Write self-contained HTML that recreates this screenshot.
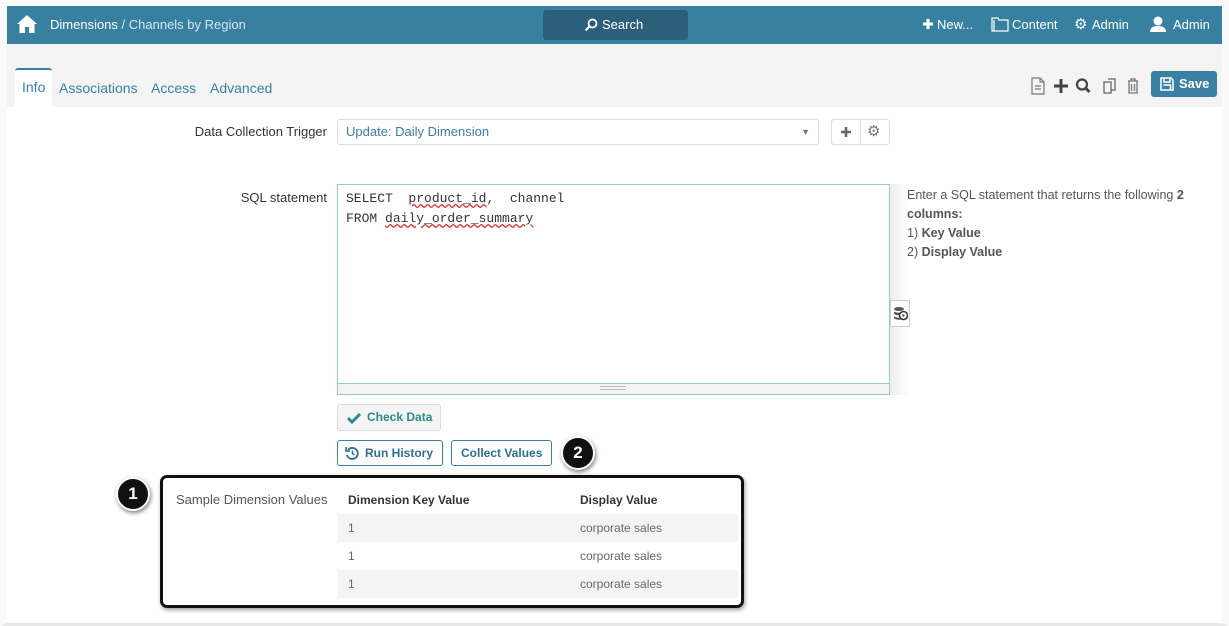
<!DOCTYPE html>
<html><head><style>
*{box-sizing:border-box;margin:0;padding:0}
body{width:1229px;height:626px;background:#fff;font-family:"Liberation Sans",sans-serif;position:relative;overflow:hidden}
.a{position:absolute}
.frame{left:0;top:0;width:1229px;height:626px;border:1px solid #d8d8d8;border-top:6px solid #fafafa;border-left:7px solid #fafafa;border-right:7px solid #fafafa;border-bottom:3px solid #e8e8e8}
.hdr{left:7px;top:6px;width:1215px;height:38px;background:#3880a0;color:#fff;font-size:13px}
.tabs{left:7px;top:44px;width:1215px;height:63px;background:#f4f4f4}
.tab{top:87px;font-size:14px;color:#3a7fa6}
.lbl{font-size:13px;color:#333;text-align:right;width:200px}
.btn{border:1px solid #3a80a5;border-radius:3px;background:#fff;color:#2f6f92;font-size:12px;font-weight:bold;height:26px;line-height:24px;padding:0 9px}
.circ{width:34px;height:34px;border-radius:50%;background:#111;border:2px solid #fff;color:#fff;font-size:17px;font-weight:bold;text-align:center;line-height:30px;box-shadow:1px 2px 4px rgba(0,0,0,.5)}
.row{left:338px;width:400px;height:28px;font-size:12px;color:#666;line-height:28px}
</style></head><body>
<div class="a frame"></div>
<div class="a hdr">
 <svg class="a" style="left:9px;top:8px" width="22" height="20" viewBox="0 0 22 20"><path d="M11 1 L1 10 L3.5 10 L3.5 19 L9 19 L9 13 L13 13 L13 19 L18.5 19 L18.5 10 L21 10 Z" fill="#fff"/></svg>
 <div class="a" style="left:43px;top:11px">Dimensions <span style="color:#d6e6ee">/ Channels by Region</span></div>
 <div class="a" style="left:536px;top:4px;width:145px;height:30px;background:#2b5f7a;border-radius:3px;line-height:30px;padding-left:41px">
  <svg class="a" style="left:41px;top:8px" width="14" height="14" viewBox="0 0 14 14"><circle cx="8.5" cy="5.5" r="4" fill="none" stroke="#fff" stroke-width="1.8"/><path d="M5.5 8.5 L1.5 12.5" stroke="#fff" stroke-width="2"/></svg><span style="margin-left:18px">Search</span></div>
 <svg class="a" style="left:915px;top:12px" width="12" height="12" viewBox="0 0 12 12"><path d="M6 1V11M1 6H11" stroke="#fff" stroke-width="3"/></svg>
 <div class="a" style="left:930px;top:11px">New...</div>
 <svg class="a" style="left:984px;top:10px" width="18" height="16" viewBox="0 0 18 16"><path d="M1 2H7L8 4H17V15H1Z M3 4V15" fill="none" stroke="#fff" stroke-width="1.2"/></svg>
 <div class="a" style="left:1005px;top:11px">Content</div>
 <div class="a" style="left:1067px;top:9px;font-size:15px">⚙</div>
 <div class="a" style="left:1085px;top:11px">Admin</div>
 <svg class="a" style="left:1142px;top:9px" width="18" height="18" viewBox="0 0 18 18"><circle cx="9" cy="6" r="4.5" fill="#fff"/><path d="M1 17C1 12 5 11 9 11S17 12 17 17Z" fill="#fff"/></svg>
 <div class="a" style="left:1166px;top:11px">Admin</div>
</div>
<div class="a tabs"></div>
<div class="a" style="left:15px;top:68px;width:37px;height:40px;background:#fff;border-top:2px solid #3a80a5;border-radius:3px 3px 0 0"></div>
<div class="a tab" style="left:22px;top:79px;color:#3a7fa6">Info</div>
<div class="a tab" style="left:59px;top:80px">Associations</div>
<div class="a tab" style="left:151px;top:80px">Access</div>
<div class="a tab" style="left:210px;top:80px">Advanced</div>
<svg class="a" style="left:1030px;top:76px" width="115" height="20" viewBox="0 0 115 20">
 <path d="M2 2H10L14 6V18H2Z M10 2V6H14 M5 10H11M5 13H11" fill="none" stroke="#777" stroke-width="1.2"/>
 <path d="M31 3V17M24 10H38" stroke="#444" stroke-width="3"/>
 <circle cx="52" cy="8.5" r="5" fill="none" stroke="#444" stroke-width="2.2"/><path d="M55.5 12 L59.5 16" stroke="#444" stroke-width="2.8"/>
 <path d="M74 6H81V17H74Z M78 3H85V14H81" fill="none" stroke="#666" stroke-width="1.3"/>
 <path d="M98 5H108 M101 5V3H105V5 M99 5V17H107V5 M101.5 8V15M104.5 8V15" fill="none" stroke="#777" stroke-width="1.3"/>
</svg>
<div class="a" style="left:1151px;top:71px;width:66px;height:26px;background:#3a80a5;border-radius:3px;color:#fff;font-weight:bold;font-size:13px;line-height:26px;padding-left:28px">Save
 <svg class="a" style="left:9px;top:6px" width="14" height="14" viewBox="0 0 14 14"><path d="M1 1H11L13 3V13H1Z M4 1V5H10V1 M3.5 8H10.5V13" fill="none" stroke="#fff" stroke-width="1.5"/></svg></div>

<div class="a lbl" style="left:127px;top:124px">Data Collection Trigger</div>
<div class="a" style="left:337px;top:119px;width:482px;height:26px;border:1px solid #ddd;border-radius:3px;font-size:13px;color:#3a7fa6;line-height:24px;padding-left:8px">Update: Daily Dimension<span class="a" style="right:8px;top:0;color:#777;font-size:9px">▼</span></div>
<div class="a" style="left:831px;top:119px;width:59px;height:26px;border:1px solid #ddd;border-radius:3px">
 <svg class="a" style="left:8px;top:6px" width="12" height="12" viewBox="0 0 12 12"><path d="M6 1V11M1 6H11" stroke="#666" stroke-width="2.6"/></svg>
 <span class="a" style="left:28px;top:0;height:24px;border-left:1px solid #ddd;padding-left:6px;color:#777;font-size:15px;line-height:24px">⚙</span></div>

<div class="a lbl" style="left:127px;top:190px">SQL statement</div>
<div class="a" style="left:337px;top:184px;width:553px;height:211px;border:1px solid #8fd5b5;background:#fff;font-family:'Liberation Mono',monospace;font-size:13px;color:#333;padding:4px 8px;line-height:20px;white-space:pre">SELECT  <u style="text-decoration-color:#d33;text-decoration-style:wavy">product_id</u>,  channel
FROM <u style="text-decoration-color:#d33;text-decoration-style:wavy">daily_order_summary</u></div>
<div class="a" style="left:338px;top:383px;width:551px;height:11px;background:#f4f4f4;border-top:1px solid #8fd5b5"></div>
<div class="a" style="left:600px;top:386px;width:26px;height:4px;border-top:1px solid #bbb;border-bottom:1px solid #bbb"></div>
<div class="a" style="left:890px;top:184px;width:20px;height:211px;background:linear-gradient(90deg,#eee,#fff)"></div>
<div class="a" style="left:890px;top:300px;width:20px;height:27px;border:1px solid #ccc;background:#fff">
 <svg class="a" style="left:2px;top:5px" width="15" height="15" viewBox="0 0 15 15"><ellipse cx="6" cy="3" rx="5" ry="2" fill="#555"/><path d="M1 5.5Q6 8 11 5.5V8Q6 10.5 1 8Z M1 10.5Q6 13 11 10.5V12.5Q6 15 1 12.5Z" fill="#555"/><circle cx="10.5" cy="9.5" r="4" fill="#fff" stroke="#333" stroke-width="1.5"/><path d="M9.5 8L12 9.5L9.5 11Z" fill="#333"/></svg></div>
<div class="a" style="left:907px;top:186px;width:300px;font-size:12.5px;color:#555;line-height:19px">Enter a SQL statement that returns the following <b>2 columns:</b><br>1) <b>Key Value</b><br>2) <b>Display Value</b></div>

<div class="a" style="left:337px;top:404px;width:104px;height:27px;background:#f4f4f4;border:1px solid #ddd;border-radius:3px;color:#2a8a8a;font-size:12px;font-weight:bold;line-height:25px;padding-left:29px">Check Data
 <svg class="a" style="left:9px;top:7px" width="14" height="12" viewBox="0 0 14 12"><path d="M1 6L5 10L13 2" fill="none" stroke="#2a8a8a" stroke-width="3"/></svg></div>
<div class="a btn" style="left:337px;top:440px;padding-left:27px">Run History
 <svg class="a" style="left:7px;top:5px" width="14" height="14" viewBox="0 0 14 14"><path d="M3 4A5.5 5.5 0 1 1 2 9" fill="none" stroke="#2f6f92" stroke-width="1.8"/><path d="M1 1V5H5" fill="none" stroke="#2f6f92" stroke-width="1.6"/><path d="M7.5 4.5V7.5L9.5 9" fill="none" stroke="#2f6f92" stroke-width="1.5"/></svg></div>
<div class="a btn" style="left:451px;top:440px">Collect Values</div>
<div class="a circ" style="left:561px;top:436px">2</div>

<div class="a" style="left:160px;top:475px;width:584px;height:133px;border:3px solid #111;border-radius:7px;box-shadow:1px 2px 4px rgba(0,0,0,.4)"></div>
<div class="a circ" style="left:116px;top:477px">1</div>
<div class="a" style="left:176px;top:492px;font-size:13px;color:#555">Sample Dimension Values</div>
<div class="a" style="left:348px;top:493px;font-size:12px;font-weight:bold;color:#333">Dimension Key Value</div>
<div class="a" style="left:580px;top:493px;font-size:12px;font-weight:bold;color:#333">Display Value</div>
<div class="a row" style="top:514px;background:#f4f4f4"><span style="margin-left:10px">1</span><span class="a" style="left:242px">corporate sales</span></div>
<div class="a row" style="top:542px"><span style="margin-left:10px">1</span><span class="a" style="left:242px">corporate sales</span></div>
<div class="a row" style="top:570px;background:#f4f4f4"><span style="margin-left:10px">1</span><span class="a" style="left:242px">corporate sales</span></div>
</body></html>
